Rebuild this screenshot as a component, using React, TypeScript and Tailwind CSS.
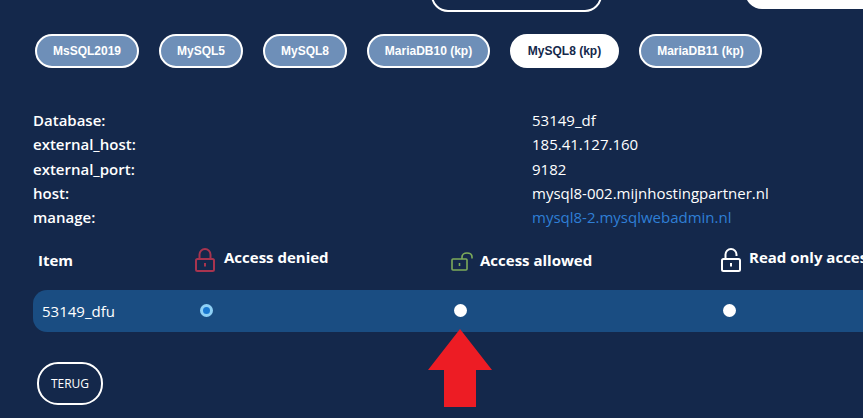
const dbButtons = [
  { label: "MsSQL2019", width: "w-[104px]" },
  { label: "MySQL5", width: "w-[84px]" },
  { label: "MySQL8", width: "w-[84px]" },
  { label: "MariaDB10 (kp)", width: "w-[123px]" },
  { label: "MySQL8 (kp)", width: "w-[109px]", active: true },
  { label: "MariaDB11 (kp)", width: "w-[123px]" },
]

const details = [
  { label: "Database:", value: "53149_df" },
  { label: "external_host:", value: "185.41.127.160" },
  { label: "external_port:", value: "9182" },
  { label: "host:", value: "mysql8-002.mijnhostingpartner.nl" },
  { label: "manage:", value: "mysql8-2.mysqlwebadmin.nl", link: true },
]

function LockIcon({ color, open }: { color: string; open?: boolean }) {
  return (
    <svg width="22" height="24" viewBox="0 0 22 24" fill="none" stroke={color} strokeWidth="2" className="shrink-0">
      <rect x="2" y="11" width="18" height="12" rx="1.5" />
      {open ? (
        <path d="M5.5 11V6.5C5.5 3.5 8 1 11 1s5.5 2.5 5.5 5.5V8" />
      ) : (
        <path d="M5.5 11V6.5C5.5 3.5 8 1 11 1s5.5 2.5 5.5 5.5V11" />
      )}
      <path d="M11 15v3.5" />
    </svg>
  )
}

function OpenLockIcon() {
  return (
    <svg width="22" height="19" viewBox="0 0 22 19" fill="none" stroke="#7cab5a" strokeWidth="1.6" className="shrink-0">
      <rect x="1" y="7" width="15" height="11" rx="1" />
      <path d="M11 7V5C11 2.6 13 1 16 1S21 2.6 21 5v1.5" />
      <path d="M8.5 11v3" />
    </svg>
  )
}

export default function App() {
  return (
    <div className="relative h-[418px] w-[863px] overflow-hidden bg-[#14284b] text-white font-['Open_Sans','Noto_Sans',sans-serif]">
      {/* top buttons, cut off by the window */}
      <div className="flex h-[12px] items-end">
        <div className="ml-[431px] h-[34px] w-[171px] shrink-0 rounded-[17px] border-2 border-white" />
        <div className="ml-[143px] mb-[3px] h-[34px] w-[160px] shrink-0 rounded-[17px] bg-white" />
      </div>

      <div className="ml-[35px] mt-[22px] flex gap-5 font-['Liberation_Sans',sans-serif]">
        {dbButtons.map((b) => (
          <button
            key={b.label}
            className={`h-[34px] ${b.width} rounded-[17px] border-2 border-white text-[12px] font-bold ${
              b.active ? "bg-white text-[#14284b]" : "bg-[#6e8fb8] text-white"
            }`}
          >
            {b.label}
          </button>
        ))}
      </div>

      <div className="ml-[33px] mt-[40px] flex flex-col text-[15px] leading-[24.3px]">
        {details.map((d) => (
          <div key={d.label} className="flex">
            <div className="w-[499px] font-semibold">{d.label}</div>
            <div className={d.link ? "text-[#2f7fd6]" : ""}>{d.value}</div>
          </div>
        ))}
      </div>

      <div className="mt-[13px] flex h-[36px] items-center whitespace-nowrap text-[15px] font-bold">
        <div className="w-[194px] shrink-0 pl-[38px]">Item</div>
        <div className="flex w-[257px] shrink-0 items-center">
          <LockIcon color="#a8344f" />
          <span className="ml-[8px] mb-[6px]">Access denied</span>
        </div>
        <div className="flex w-[269px] shrink-0 items-center pt-[2px]">
          <OpenLockIcon />
          <span className="ml-[7px] mb-[2px]">Access allowed</span>
        </div>
        <div className="flex shrink-0 items-center">
          <LockIcon color="#ffffff" open />
          <span className="ml-[7px] mb-[6px]">Read only access</span>
        </div>
      </div>

      <div className="ml-[33px] mt-[12px] flex h-[42px] items-center rounded-l-[14px] bg-[#1a4d82] text-[15px]">
        <div className="w-[161px] pl-[9px]">53149_dfu</div>
        <div className="w-[257px] pl-[5.5px] pb-[2px]">
          <div className="h-[13px] w-[13px] rounded-full border-[3px] border-[#8ed0f5] bg-[#1a78d0]" />
        </div>
        <div className="w-[269px] pl-[2.5px] pb-[2px]">
          <div className="h-[13px] w-[13px] rounded-full bg-white" />
        </div>
        <div className="pl-[2.5px] pb-[2px]">
          <div className="h-[13px] w-[13px] rounded-full bg-white" />
        </div>
      </div>

      <button className="ml-[37px] mt-[30px] h-[43px] w-[66px] rounded-[21px] border-2 border-white text-[12px]">
        TERUG
      </button>

      {/* red annotation arrow */}
      <svg className="absolute left-[428px] top-[329px]" width="64" height="78" viewBox="0 0 64 78">
        <path d="M32 0L64 41H48V78H16V41H0Z" fill="#ed1c24" />
      </svg>
    </div>
  )
}
